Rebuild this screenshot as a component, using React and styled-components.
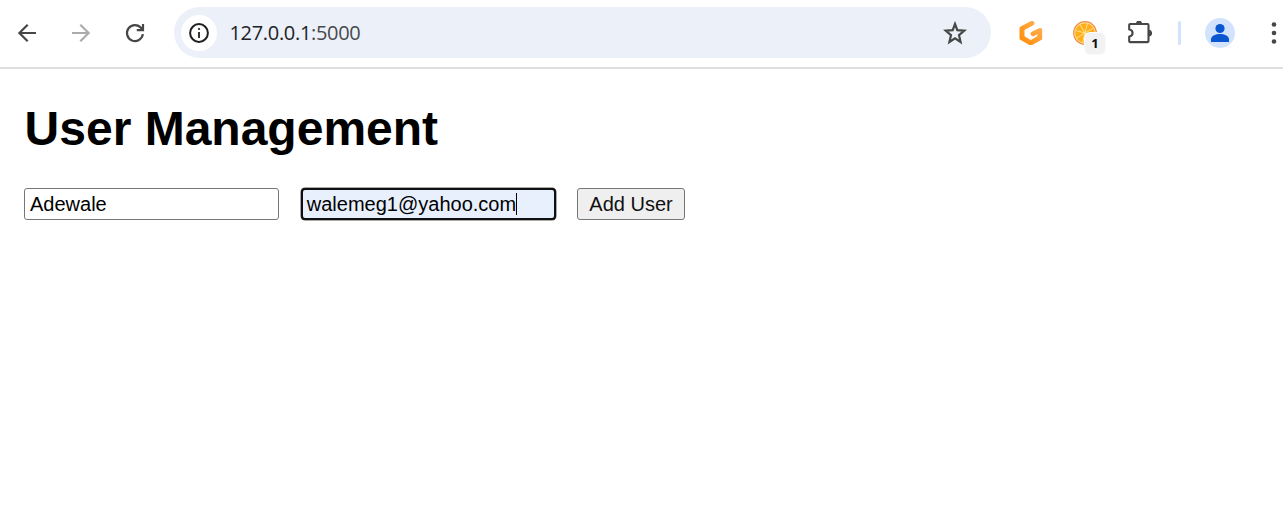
import React from "react";
import styled, { createGlobalStyle } from "styled-components";

const GlobalStyle = createGlobalStyle`
  * { box-sizing: border-box; }
  body {
    margin: 0;
    background: #fff;
    color: #000;
    font-family: "Liberation Sans", Arial, sans-serif;
    overflow: hidden;
  }
`;

const Window = styled.div`
  height: 511px;
  overflow: hidden;
`;

const Toolbar = styled.header`
  display: flex;
  align-items: center;
  height: 69px;
  padding: 0 0 2px 15px;
  border-bottom: 2px solid #e0e0e0;
`;

const Icon = styled.svg`
  display: block;
  flex: none;
  width: ${(p) => p.$size || 24}px;
  height: ${(p) => p.$size || 24}px;
  color: ${(p) => p.$color || "#474747"};
  fill: none;
`;

const Navigation = styled.nav`
  display: flex;
  flex: none;
  gap: 30px;
  width: 159px;
`;

const AddressBar = styled.div`
  display: flex;
  align-items: center;
  flex: none;
  width: 817px;
  height: 51px;
  padding: 0 24px 0 7px;
  border-radius: 26px;
  background: #ecf0f9;
`;

const SiteInfo = styled.div`
  display: grid;
  place-items: center;
  width: 36px;
  height: 36px;
  border-radius: 50%;
  background: #fff;
`;

const Address = styled.div`
  flex: 1;
  margin-left: 12.5px;
  font: 20px/28px "Open Sans", "Noto Sans", sans-serif;
  letter-spacing: -0.32px;
  color: #47494d;
`;

const Host = styled.span`
  color: #202226;
`;

const Actions = styled.div`
  display: flex;
  align-items: center;
  flex: none;
  margin-left: 28px;
`;

const Extension = styled.div`
  position: relative;
  margin: 0 31px 0 30px;
`;

const Badge = styled.span`
  position: absolute;
  left: 12px;
  top: 12px;
  width: 20px;
  height: 21px;
  border-radius: 5px;
  background: #f2f2f2;
  color: #111;
  font: 700 13px/21px "Open Sans", sans-serif;
  text-align: center;
  box-shadow: 0 0 0 1px #fafafa;
`;

const Separator = styled.i`
  width: 3px;
  height: 24px;
  margin: 0 24px 0 26px;
  border-radius: 2px;
  background: #d3e3fd;
`;

const Avatar = styled.div`
  width: 30px;
  height: 30px;
  margin-right: 26.5px;
  border-radius: 50%;
  background: #d3e3fd;
  overflow: hidden;
`;

const Page = styled.main`
  padding: 32px 24px;
`;

const Title = styled.h1`
  margin: 0;
  font-size: 48px;
  line-height: 55px;
  font-weight: 700;
  text-indent: 0.6px;
`;

const Form = styled.form`
  display: flex;
  align-items: flex-start;
  margin-top: 32px;
`;

const Field = styled.div`
  display: flex;
  align-items: center;
  width: 255px;
  height: 32px;
  margin-right: ${(p) => (p.$focused ? 21 : 22)}px;
  padding: 0 ${(p) => (p.$focused ? 3.8 : 5)}px;
  border: ${(p) => (p.$focused ? "2.5px solid #101010" : "1px solid #767676")};
  box-shadow: ${(p) => (p.$focused ? "0 0 0 0.5px #555" : "none")};
  border-radius: ${(p) => (p.$focused ? 4 : 3)}px;
  background: ${(p) => (p.$focused ? "#e8f0fe" : "#fff")};
  font-size: 20px;
  line-height: 24px;
`;

const Caret = styled.i`
  width: 1px;
  height: 22px;
  background: #000;
`;

const SubmitButton = styled.button`
  width: 108px;
  height: 32px;
  padding: 0;
  border: 1px solid #767676;
  border-radius: 3px;
  background: #efefef;
  color: #111;
  font: 20px/24px "Liberation Sans", Arial, sans-serif;
`;

const BackIcon = () => (
  <Icon viewBox="0 0 24 24">
    <path d="M21 12H4.5M12.7 3.8 4.4 12l8.3 8.2" stroke="currentColor" strokeWidth="2.2" />
  </Icon>
);

const ForwardIcon = () => (
  <Icon viewBox="0 0 24 24" $color="#ababab">
    <path d="M3 12h16.5M11.3 3.8l8.3 8.2-8.3 8.2" stroke="currentColor" strokeWidth="2.2" />
  </Icon>
);

const ReloadIcon = () => (
  <Icon viewBox="0 0 24 24">
    <path d="M19.9 13.2A8 8 0 1 1 18.2 7L19.6 8.8" stroke="currentColor" strokeWidth="2.2" />
    <path d="M20 3v6.2h-6.2" stroke="currentColor" strokeWidth="2.2" />
  </Icon>
);

const InfoIcon = () => (
  <Icon viewBox="0 0 24 24" $color="#1f1f1f">
    <circle cx="12" cy="12" r="8.9" stroke="currentColor" strokeWidth="2" />
    <path d="M12 10.9v6" stroke="currentColor" strokeWidth="1.8" />
    <circle cx="12" cy="8" r="1.1" fill="currentColor" />
  </Icon>
);

const StarIcon = () => (
  <Icon viewBox="0 0 24 24">
    <path
      d="m12 3 2.3 6.1 7 .6-5.3 4.5 1.6 6.8-5.6-3.6-5.6 3.6L8 14.2 2.7 9.7l7-.6Z"
      stroke="currentColor"
      strokeWidth="2.2"
    />
  </Icon>
);

const HexIcon = () => (
  <Icon viewBox="-.5 .5 24 24">
    <defs>
      <linearGradient id="hex" x1="1" y1="0" x2="0" y2="1">
        <stop stopColor="#ffb45b" />
        <stop offset="1" stopColor="#ff8a00" />
      </linearGradient>
    </defs>
    <path
      d="M11.3.8Q13.6-.3 14.7 1.7 15.6 3.8 13.7 4.8L5 9.6v6.2l6.3 3.6 6.5-3.6v-2.1l-3.2 1.7q-2.1 1-3.2-.8-1-2.2 1-3.3l7.1-3.6q3.2-1.1 3.2 2v8.2q0 1.1-1 1.7l-9.1 5q-1.3.7-2.6 0l-8.7-5Q0 19 0 17.9V7.7Q0 6.6 1.1 6Z"
      fill="url(#hex)"
    />
  </Icon>
);

const OrangeIcon = () => (
  <Icon viewBox="0 0 24 24">
    <circle cx="12" cy="12" r="11.3" fill="#ffe2a0" stroke="#f28d45" strokeWidth="1.2" />
    <circle cx="12" cy="12" r="9.8" fill="#ffae19" />
    <path
      d="M12 2v20M2 12h20M5 5l14 14M19 5 5 19"
      stroke="#ffe08a"
      strokeWidth="1"
      transform="rotate(14 12 12)"
    />
  </Icon>
);

const PuzzleIcon = () => (
  <Icon viewBox="0 1 24 24">
    <path
      d="M2.2 4h17.3q1 0 1 1v16.1q0 1-1 1H2.2q-1 0-1-1v-4.4c4.5-1 4.5-6.4 0-7.4V5q0-1 1-1Z"
      stroke="currentColor"
      strokeWidth="2.1"
    />
    <path d="M8 4a3 3.6 0 0 1 6 0ZM20.5 9.8a3.6 3.4 0 0 1 0 6.8Z" fill="currentColor" />
  </Icon>
);

const PersonIcon = () => (
  <Icon viewBox="0 0 30 30" $size={30} $color="#0b57d0">
    <circle cx="15" cy="10.5" r="4.6" fill="currentColor" />
    <path d="M6 24v-2.5c0-4 5-5.5 9-5.5s9 1.5 9 5.5V24Z" fill="currentColor" />
  </Icon>
);

const MenuIcon = () => (
  <Icon viewBox="0 0 24 24">
    <circle cx="12" cy="3.5" r="2.3" fill="currentColor" />
    <circle cx="12" cy="12" r="2.3" fill="currentColor" />
    <circle cx="12" cy="20.5" r="2.3" fill="currentColor" />
  </Icon>
);

export default function App() {
  return (
    <Window>
      <GlobalStyle />
      <Toolbar>
        <Navigation>
          <BackIcon />
          <ForwardIcon />
          <ReloadIcon />
        </Navigation>
        <AddressBar>
          <SiteInfo>
            <InfoIcon />
          </SiteInfo>
          <Address>
            <Host>127.0.0.1</Host>:5000
          </Address>
          <StarIcon />
        </AddressBar>
        <Actions>
          <HexIcon />
          <Extension>
            <OrangeIcon />
            <Badge>1</Badge>
          </Extension>
          <PuzzleIcon />
          <Separator />
          <Avatar>
            <PersonIcon />
          </Avatar>
          <MenuIcon />
        </Actions>
      </Toolbar>
      <Page>
        <Title>User Management</Title>
        <Form>
          <Field>Adewale</Field>
          <Field $focused>
            walemeg1@yahoo.com
            <Caret />
          </Field>
          <SubmitButton type="button">Add User</SubmitButton>
        </Form>
      </Page>
    </Window>
  );
}
